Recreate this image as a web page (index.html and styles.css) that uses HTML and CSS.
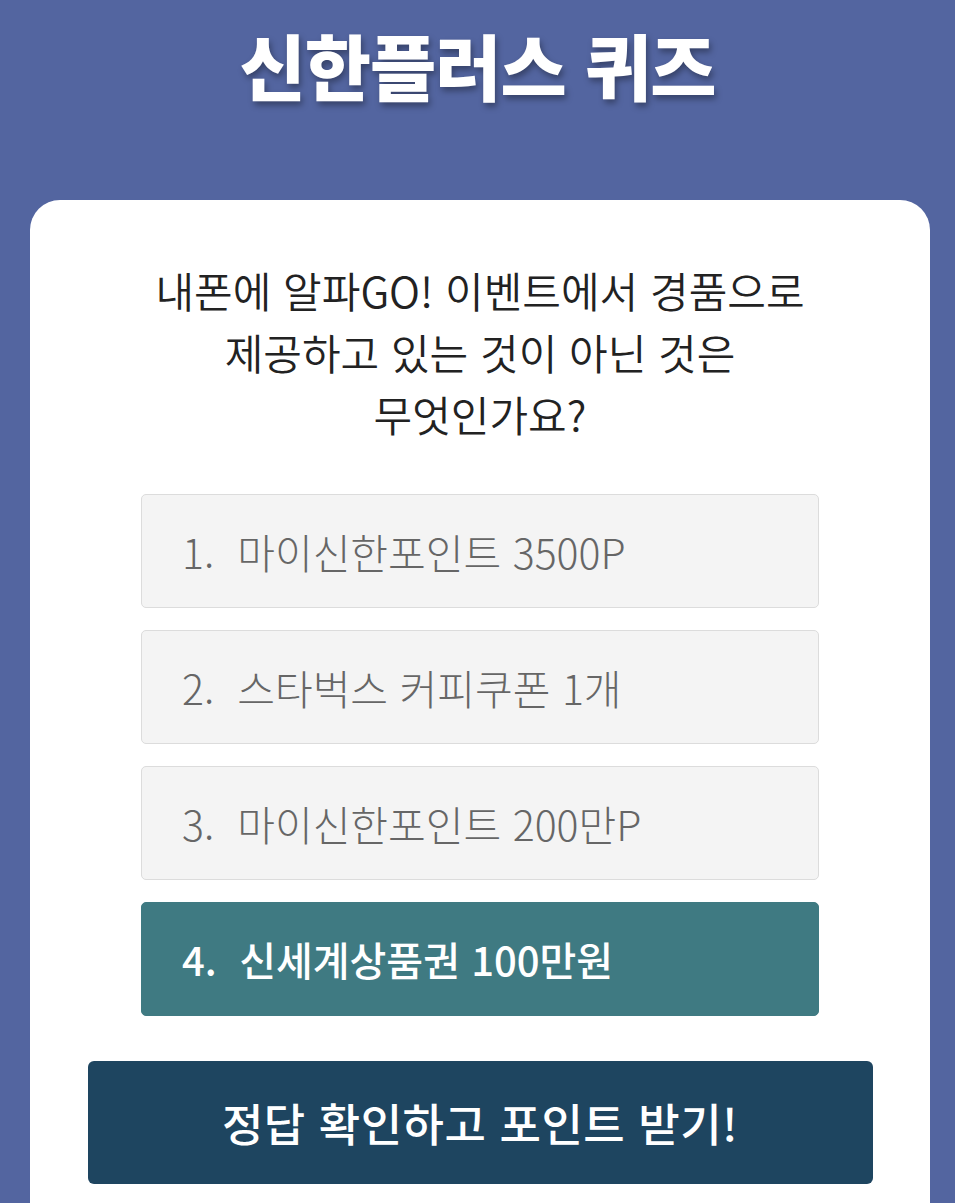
FILE: index.html
```html
<!DOCTYPE html>
<html lang="ko">
<head>
  <meta charset="UTF-8" />
  <title>신한플러스 퀴즈</title>
  <meta name="viewport" content="width=device-width, initial-scale=1.0" />
  <link rel="stylesheet" href="styles.css">
</head>
<body>
  <div class="header">
    <h1>신한플러스 퀴즈</h1>
  </div>

  <div class="quiz-card">
    <p class="question">내폰에 알파GO! 이벤트에서 경품으로<br>제공하고 있는 것이 아닌 것은<br>무엇인가요?</p>

    <ul class="options">
      <li class="option">1.&nbsp; 마이신한포인트 3500P</li>
      <li class="option">2.&nbsp; 스타벅스 커피쿠폰 1개</li>
      <li class="option">3.&nbsp; 마이신한포인트 200만P</li>
      <li class="option selected">4.&nbsp; 신세계상품권 100만원</li>
    </ul>

    <button class="submit-btn">정답 확인하고 포인트 받기!</button>
  </div>
</body>
</html>
```

FILE: styles.css
```css
body {
  margin: 0;
  background: #5365a0;
  font-family: "Noto Sans CJK KR", "Noto Sans", sans-serif;
}

.header {
  height: 200px;
  display: flex;
  justify-content: center;
}

.header h1 {
  margin: 14px 0 0;
  color: #fff;
  font-size: 72px;
  font-weight: 900;
  letter-spacing: -1px;
  line-height: 100px;
  text-shadow: 2px 4px 6px rgba(0, 0, 0, 0.35);
}

.quiz-card {
  margin: 0 25px 0 30px;
  background: #fff;
  border-radius: 30px 30px 0 0;
  padding: 59px 0 30px;
  min-height: 950px;
  display: flex;
  flex-direction: column;
  align-items: center;
}

.question {
  margin: 0;
  text-align: center;
  color: #222;
  font-size: 42px;
  font-weight: 350;
  line-height: 62px;
}

.options {
  list-style: none;
  margin: 49px 0 0;
  padding: 0;
  width: 678px;
  display: flex;
  flex-direction: column;
  gap: 22px;
}

.option {
  height: 112px;
  display: flex;
  align-items: center;
  padding-left: 40px;
  background: #f4f4f4;
  border: 1px solid #dcdcdc;
  border-radius: 5px;
  color: #666;
  font-size: 41px;
  font-weight: 300;
}

.option.selected {
  background: #3f7a82;
  border-color: #3f7a82;
  color: #fff;
  font-size: 40px;
  font-weight: 500;
}

.submit-btn {
  margin-top: 45px;
  width: 785px;
  height: 123px;
  border: none;
  border-radius: 6px;
  background: #1e4560;
  color: #fff;
  font-family: inherit;
  font-size: 45px;
  font-weight: 500;
  letter-spacing: 0.5px;
  cursor: pointer;
}
```
